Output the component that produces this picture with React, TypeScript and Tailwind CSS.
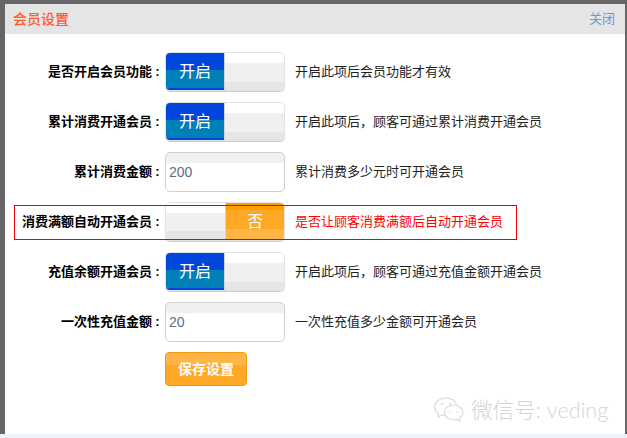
const FONT = 'font-["Liberation_Sans","Noto_Sans_CJK_SC",sans-serif]'

function OnToggle() {
  return (
    <div className="flex h-[39px] w-[120px] overflow-hidden rounded-[5px] border border-[#e2e2e2] shadow-[0_1px_0_#ccc]">
      <div className="flex w-[58px] items-center justify-center bg-[linear-gradient(#0046dc_0_17px,#0080b8_17px_35px,#0046dc_35px)] text-[16px] text-white">
        开启
      </div>
      <div className="flex-1 border-l border-[#d5d5d5] bg-[linear-gradient(#fff_0_10px,#f0f0f0_10px_29px,#e6e6e6_29px)]" />
    </div>
  )
}

function OffToggle() {
  return (
    <div className="flex h-[39px] w-[120px] overflow-hidden rounded-[5px] border border-[#e2e2e2] shadow-[0_1px_0_#ccc]">
      <div className="flex-1 border-r border-[#d5d5d5] bg-[linear-gradient(#fff_0_10px,#f0f0f0_10px_28px,#e6e6e6_28px)]" />
      <div className="flex w-[58px] items-center justify-center bg-[linear-gradient(#ffa000_0_7px,#ffa826_7px_26px,#ffb545_26px)] text-[16px] text-white">
        否
      </div>
    </div>
  )
}

function ValueInput({ value }: { value: string }) {
  return (
    <div className="h-[40px] w-[120px] rounded-[5px] border border-[#cfcfcf] bg-[linear-gradient(#f0f0f0_0_10px,#fff_10px)] pl-[3px] text-[14px] leading-[38px] text-[#5f6b80]">
      {value}
    </div>
  )
}

function Row({ label, hint, red, children }: { label: string; hint: string; red?: boolean; children: React.ReactNode }) {
  return (
    <div className="flex h-[40px] items-center">
      <div className="flex w-[157px] justify-end text-[13px] font-bold whitespace-nowrap text-black">
        <span>{label}</span>
        <span className="w-[10px] pl-[1px] text-center">:</span>
      </div>
      <div className="ml-[3px] h-[40px] w-[120px]">{children}</div>
      <div className={`ml-[10px] text-[13px] whitespace-nowrap ${red ? 'text-[#f00]' : 'text-[#222]'}`}>{hint}</div>
    </div>
  )
}

function WechatMark() {
  return (
    <svg width="32" height="26" viewBox="0 0 32 26" fill="none" stroke="#d8d8d8" strokeWidth="1.1">
      <path d="M13 1C6.5 1 1.5 5 1.5 10c0 2.8 1.6 5 4 6.600L5 20l3.600-2c1.300.4 2.600.6 4 .6" />
      <path d="M13 1c5 0 9.400 2.600 10.600 6.400" />
      <path d="M20.500 8c-5.200 0-9 3.400-9 7.400s3.800 7.400 9 7.400c1.100 0 2.100-.2 3-.4l3.400 2-.8-3.200c2.300-1.400 3.900-3.400 3.900-5.800 0-4-4.200-7.400-9.500-7.400z" />
      <circle cx="9" cy="7" r="1" fill="#d8d8d8" stroke="none" />
      <circle cx="17" cy="7" r="1" fill="#d8d8d8" stroke="none" />
      <circle cx="17" cy="15" r=".8" fill="#d8d8d8" stroke="none" />
      <circle cx="24" cy="15" r=".8" fill="#d8d8d8" stroke="none" />
    </svg>
  )
}

export default function App() {
  return (
    <div className={`flex h-[438px] w-[627px] flex-col overflow-hidden bg-[#666] pt-[4px] pr-[2px] pl-[5px] ${FONT}`}>
      <div className="relative flex flex-1 flex-col bg-white">
        <div className="flex h-[30px] items-center justify-between bg-[#e5e5e5] pr-[10px] pl-[8px]">
          <span className="text-[14px] font-medium text-[#ff5a2a]">会员设置</span>
          <span className="text-[13px] text-[#6a94e4]">关闭</span>
        </div>

        <div className="flex flex-col gap-[10px] pt-[18px]">
          <Row label="是否开启会员功能" hint="开启此项后会员功能才有效"><OnToggle /></Row>
          <Row label="累计消费开通会员" hint="开启此项后，顾客可通过累计消费开通会员"><OnToggle /></Row>
          <Row label="累计消费金额" hint="累计消费多少元时可开通会员"><ValueInput value="200" /></Row>
          <Row label="消费满额自动开通会员" hint="是否让顾客消费满额后自动开通会员" red><OffToggle /></Row>
          <Row label="充值余额开通会员" hint="开启此项后，顾客可通过充值金额开通会员"><OnToggle /></Row>
          <Row label="一次性充值金额" hint="一次性充值多少金额可开通会员"><ValueInput value="20" /></Row>
          <div className="pl-[160px]">
            <button className="h-[34px] w-[82px] rounded-[4px] border border-[#f09a10] bg-[linear-gradient(#ffb545_0_12px,#ffa826_12px)] text-[14px] font-bold text-white">
              保存设置
            </button>
          </div>
        </div>

        <div className="pointer-events-none absolute top-[201px] left-[9px] h-[35px] w-[503px] border border-[#e00]" />

        <div className='absolute top-[390px] left-[428px] flex items-center gap-[6px] font-["Lato","Noto_Sans_CJK_SC",sans-serif] text-[21.6px] font-light whitespace-nowrap text-[#d4d4d4]'>
          <WechatMark />
          <span>微信号: veding</span>
        </div>
      </div>
      <div className="-mr-[2px] -ml-[5px] h-[4px] bg-[#eef3f9]" />
    </div>
  )
}
